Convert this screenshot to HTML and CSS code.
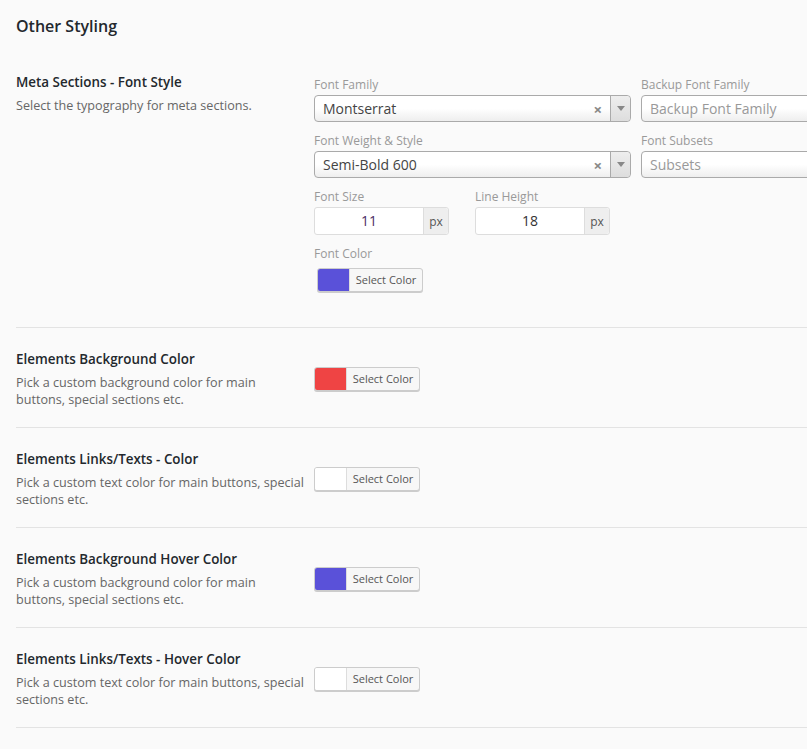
FILE: index.html
```html
<!DOCTYPE html>
<html>
<head>
    <title>Other Styling</title>
    <link rel="stylesheet" href="styles.css">
</head>
<body>
    <div class="panel">
        <h2 class="panel-title">Other Styling</h2>

        <!-- Meta sections typography -->
        <div class="row row-top">
            <div class="row-label">
                <h3>Meta Sections - Font Style</h3>
                <p>Select the typography for meta sections.</p>
            </div>
            <div class="row-fields">
                <div class="field-grid">
                    <div class="field">
                        <label>Font Family</label>
                        <div class="select">
                            <span class="select-value">Montserrat</span>
                            <span class="select-clear">&times;</span>
                            <span class="select-arrow"></span>
                        </div>
                    </div>
                    <div class="field">
                        <label>Backup Font Family</label>
                        <div class="select select-plain">
                            <span class="select-value placeholder">Backup Font Family</span>
                        </div>
                    </div>
                    <div class="field">
                        <label>Font Weight &amp; Style</label>
                        <div class="select">
                            <span class="select-value">Semi-Bold 600</span>
                            <span class="select-clear">&times;</span>
                            <span class="select-arrow"></span>
                        </div>
                    </div>
                    <div class="field">
                        <label>Font Subsets</label>
                        <div class="select select-plain">
                            <span class="select-value placeholder">Subsets</span>
                        </div>
                    </div>
                </div>
                <div class="size-fields">
                    <div class="field">
                        <label>Font Size</label>
                        <div class="unit-input">
                            <span class="unit-value purple">11</span>
                            <span class="unit-addon">px</span>
                        </div>
                    </div>
                    <div class="field">
                        <label>Line Height</label>
                        <div class="unit-input">
                            <span class="unit-value">18</span>
                            <span class="unit-addon">px</span>
                        </div>
                    </div>
                </div>
                <div class="field">
                    <label>Font Color</label>
                    <button class="color-btn color-btn-inset"><span class="swatch swatch-blue"></span><span class="color-text">Select Color</span></button>
                </div>
            </div>
        </div>

        <div class="row">
            <div class="row-label">
                <h3>Elements Background Color</h3>
                <p>Pick a custom background color for main buttons, special sections etc.</p>
            </div>
            <div class="row-fields">
                <button class="color-btn"><span class="swatch swatch-red"></span><span class="color-text">Select Color</span></button>
            </div>
        </div>

        <div class="row">
            <div class="row-label">
                <h3>Elements Links/Texts - Color</h3>
                <p>Pick a custom text color for main buttons, special sections etc.</p>
            </div>
            <div class="row-fields">
                <button class="color-btn"><span class="swatch"></span><span class="color-text">Select Color</span></button>
            </div>
        </div>

        <div class="row">
            <div class="row-label">
                <h3>Elements Background Hover Color</h3>
                <p>Pick a custom background color for main buttons, special sections etc.</p>
            </div>
            <div class="row-fields">
                <button class="color-btn"><span class="swatch swatch-blue"></span><span class="color-text">Select Color</span></button>
            </div>
        </div>

        <div class="row">
            <div class="row-label">
                <h3>Elements Links/Texts - Hover Color</h3>
                <p>Pick a custom text color for main buttons, special sections etc.</p>
            </div>
            <div class="row-fields">
                <button class="color-btn"><span class="swatch"></span><span class="color-text">Select Color</span></button>
            </div>
        </div>
    </div>
</body>
</html>
```

FILE: styles.css
```css
html, body {
    margin: 0;
    background: #fafafa;
    overflow: hidden;
}

body {
    font-family: "Open Sans", "Noto Sans", Arial, sans-serif;
    color: #333;
}

.panel {
    width: 960px;
    padding: 0 0 0 16px;
}

.panel-title {
    margin: 0;
    padding: 14px 0 0;
    font-size: 16px;
    font-weight: 600;
    line-height: 24px;
    color: #23282d;
}

/* One option row: description on the left, controls on the right */
.row {
    display: flex;
    align-items: center;
    padding: 21px 0 19px;
    border-bottom: 1px solid #e3e3e3;
}

.row-top {
    align-items: flex-start;
    margin-top: 13px;
    padding-bottom: 25px;
}

.row-label {
    width: 298px;
    flex-shrink: 0;
}

.row-label h3 {
    margin: 0;
    font-size: 13.4px;
    font-weight: 600;
    line-height: 20px;
    color: #23282d;
}

.row-label p {
    max-width: 289.5px;
    margin: 5px 0 0;
    font-size: 12.6px;
    line-height: 17px;
    color: #666;
}

.row-fields {
    flex: 1;
}

.row-top .row-fields {
    padding-top: 4px;
}

.field-grid {
    display: grid;
    grid-template-columns: 317px 317px;
    column-gap: 10px;
}

.field {
    margin-bottom: 10px;
}

.field label {
    display: block;
    font-size: 12px;
    line-height: 17px;
    color: #999;
    margin-bottom: 2px;
}

/* Select box */
.select {
    display: flex;
    align-items: center;
    height: 25px;
    border: 1px solid #aaa;
    border-radius: 4px;
    background: linear-gradient(#fff 50%, #eee);
}

.select-value {
    flex: 1;
    padding-left: 8px;
    font-size: 14px;
    color: #444;
}

.select-value.placeholder {
    color: #999;
}

.select-clear {
    font-size: 15px;
    font-weight: bold;
    color: #888;
    margin-right: 8px;
}

.select-arrow {
    align-self: stretch;
    width: 19px;
    border-left: 1px solid #aaa;
    border-radius: 0 4px 4px 0;
    background: linear-gradient(#eee, #ddd);
    position: relative;
}

.select-arrow::after {
    content: "";
    position: absolute;
    left: 6px;
    top: 10px;
    border-left: 4px solid transparent;
    border-right: 4px solid transparent;
    border-top: 5px solid #888;
}

/* Font size / line height */
.size-fields {
    display: flex;
    gap: 26px;
}

.unit-input {
    display: flex;
    box-sizing: border-box;
    width: 135px;
    height: 28px;
    border: 1px solid #ddd;
    border-radius: 3px;
    background: #fff;
}

.unit-value {
    flex: 1;
    text-align: center;
    font-size: 14px;
    line-height: 26px;
    color: #333;
}

.unit-value.purple {
    color: #4b2f66;
}

.unit-addon {
    width: 24px;
    border-left: 1px solid #ddd;
    background: #eee;
    border-radius: 0 3px 3px 0;
    font-size: 12px;
    line-height: 28px;
    text-align: center;
    color: #555;
}

/* Color picker button */
.color-btn {
    display: flex;
    align-items: stretch;
    width: 106px;
    height: 24px;
    padding: 0;
    border: 1px solid #ccc;
    border-radius: 3px;
    background: #f7f7f7;
    box-shadow: 0 1px 0 #ccc;
    font-family: inherit;
    cursor: pointer;
    overflow: hidden;
}

.color-btn-inset {
    margin: 6px 0 0 3px;
}

.swatch {
    width: 31px;
    background: #fff;
    border-right: 1px solid #ddd;
}

.swatch-blue {
    background: #5a51d9;
}

.swatch-red {
    background: #ef4444;
}

.color-text {
    flex: 1;
    font-size: 11px;
    line-height: 22px;
    color: #555;
}
```
